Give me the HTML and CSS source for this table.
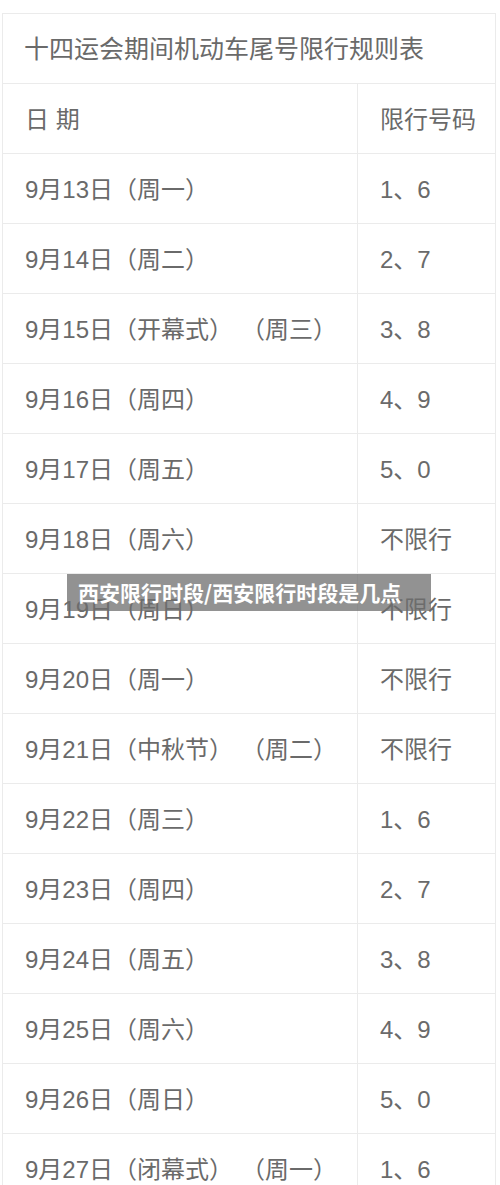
FILE: index.html
```html
<!DOCTYPE html>
<html lang="zh-CN">
<head>
<meta charset="utf-8">
<title>西安限行时段</title>
<link rel="stylesheet" href="styles.css">
</head>
<body>
<div class="page">
  <table class="rules">
    <colgroup><col class="col-date"><col class="col-num"></colgroup>
    <tr class="title-row"><td colspan="2">十四运会期间机动车尾号限行规则表</td></tr>
    <tr><td>日 期</td><td>限行号码</td></tr>
    <tr><td>9月13日（周一）</td><td>1、6</td></tr>
    <tr><td>9月14日（周二）</td><td>2、7</td></tr>
    <tr><td>9月15日（开幕式）<span class="sp"></span>（周三）</td><td>3、8</td></tr>
    <tr><td>9月16日（周四）</td><td>4、9</td></tr>
    <tr><td>9月17日（周五）</td><td>5、0</td></tr>
    <tr><td>9月18日（周六）</td><td>不限行</td></tr>
    <tr><td>9月19日（周日）</td><td>不限行</td></tr>
    <tr><td>9月20日（周一）</td><td>不限行</td></tr>
    <tr><td>9月21日（中秋节）<span class="sp"></span>（周二）</td><td>不限行</td></tr>
    <tr><td>9月22日（周三）</td><td>1、6</td></tr>
    <tr><td>9月23日（周四）</td><td>2、7</td></tr>
    <tr><td>9月24日（周五）</td><td>3、8</td></tr>
    <tr><td>9月25日（周六）</td><td>4、9</td></tr>
    <tr><td>9月26日（周日）</td><td>5、0</td></tr>
    <tr><td>9月27日（闭幕式）<span class="sp"></span>（周一）</td><td>1、6</td></tr>
  </table>
  <div class="caption">西安限行时段/西安限行时段是几点</div>
</div>
</body>
</html>
```
FILE: styles.css
```css
html, body {
  margin: 0;
  padding: 0;
  background: #fff;
}
body {
  width: 500px;
  height: 1185px;
  overflow: hidden;
}
.page {
  position: relative;
  padding-top: 13px;
  padding-left: 2px;
}
.rules {
  border-collapse: collapse;
  width: 493px;
  table-layout: fixed;
  font-family: "Liberation Sans", "Noto Sans CJK SC", sans-serif;
  font-size: 24px;
  color: #6a6a6a;
}
.col-date {
  width: 355px;
}
.col-num {
  width: 138px;
}
.rules td {
  height: 70px;
  border: 1px solid #ebebeb;
  padding: 0 0 3px 22px;
  vertical-align: middle;
  white-space: nowrap;
  box-sizing: border-box;
}
.sp {
  display: inline-block;
  width: 8px;
}
.title-row td {
  font-size: 25px;
  padding-left: 21px;
}
.caption {
  position: absolute;
  left: 67px;
  top: 574px;
  width: 364px;
  height: 37px;
  box-sizing: border-box;
  padding-left: 11px;
  background: rgba(110, 110, 110, 0.75);
  color: #fff;
  font-family: "Noto Sans CJK SC", sans-serif;
  font-weight: 700;
  font-size: 21px;
  line-height: 37px;
  white-space: nowrap;
}
```
